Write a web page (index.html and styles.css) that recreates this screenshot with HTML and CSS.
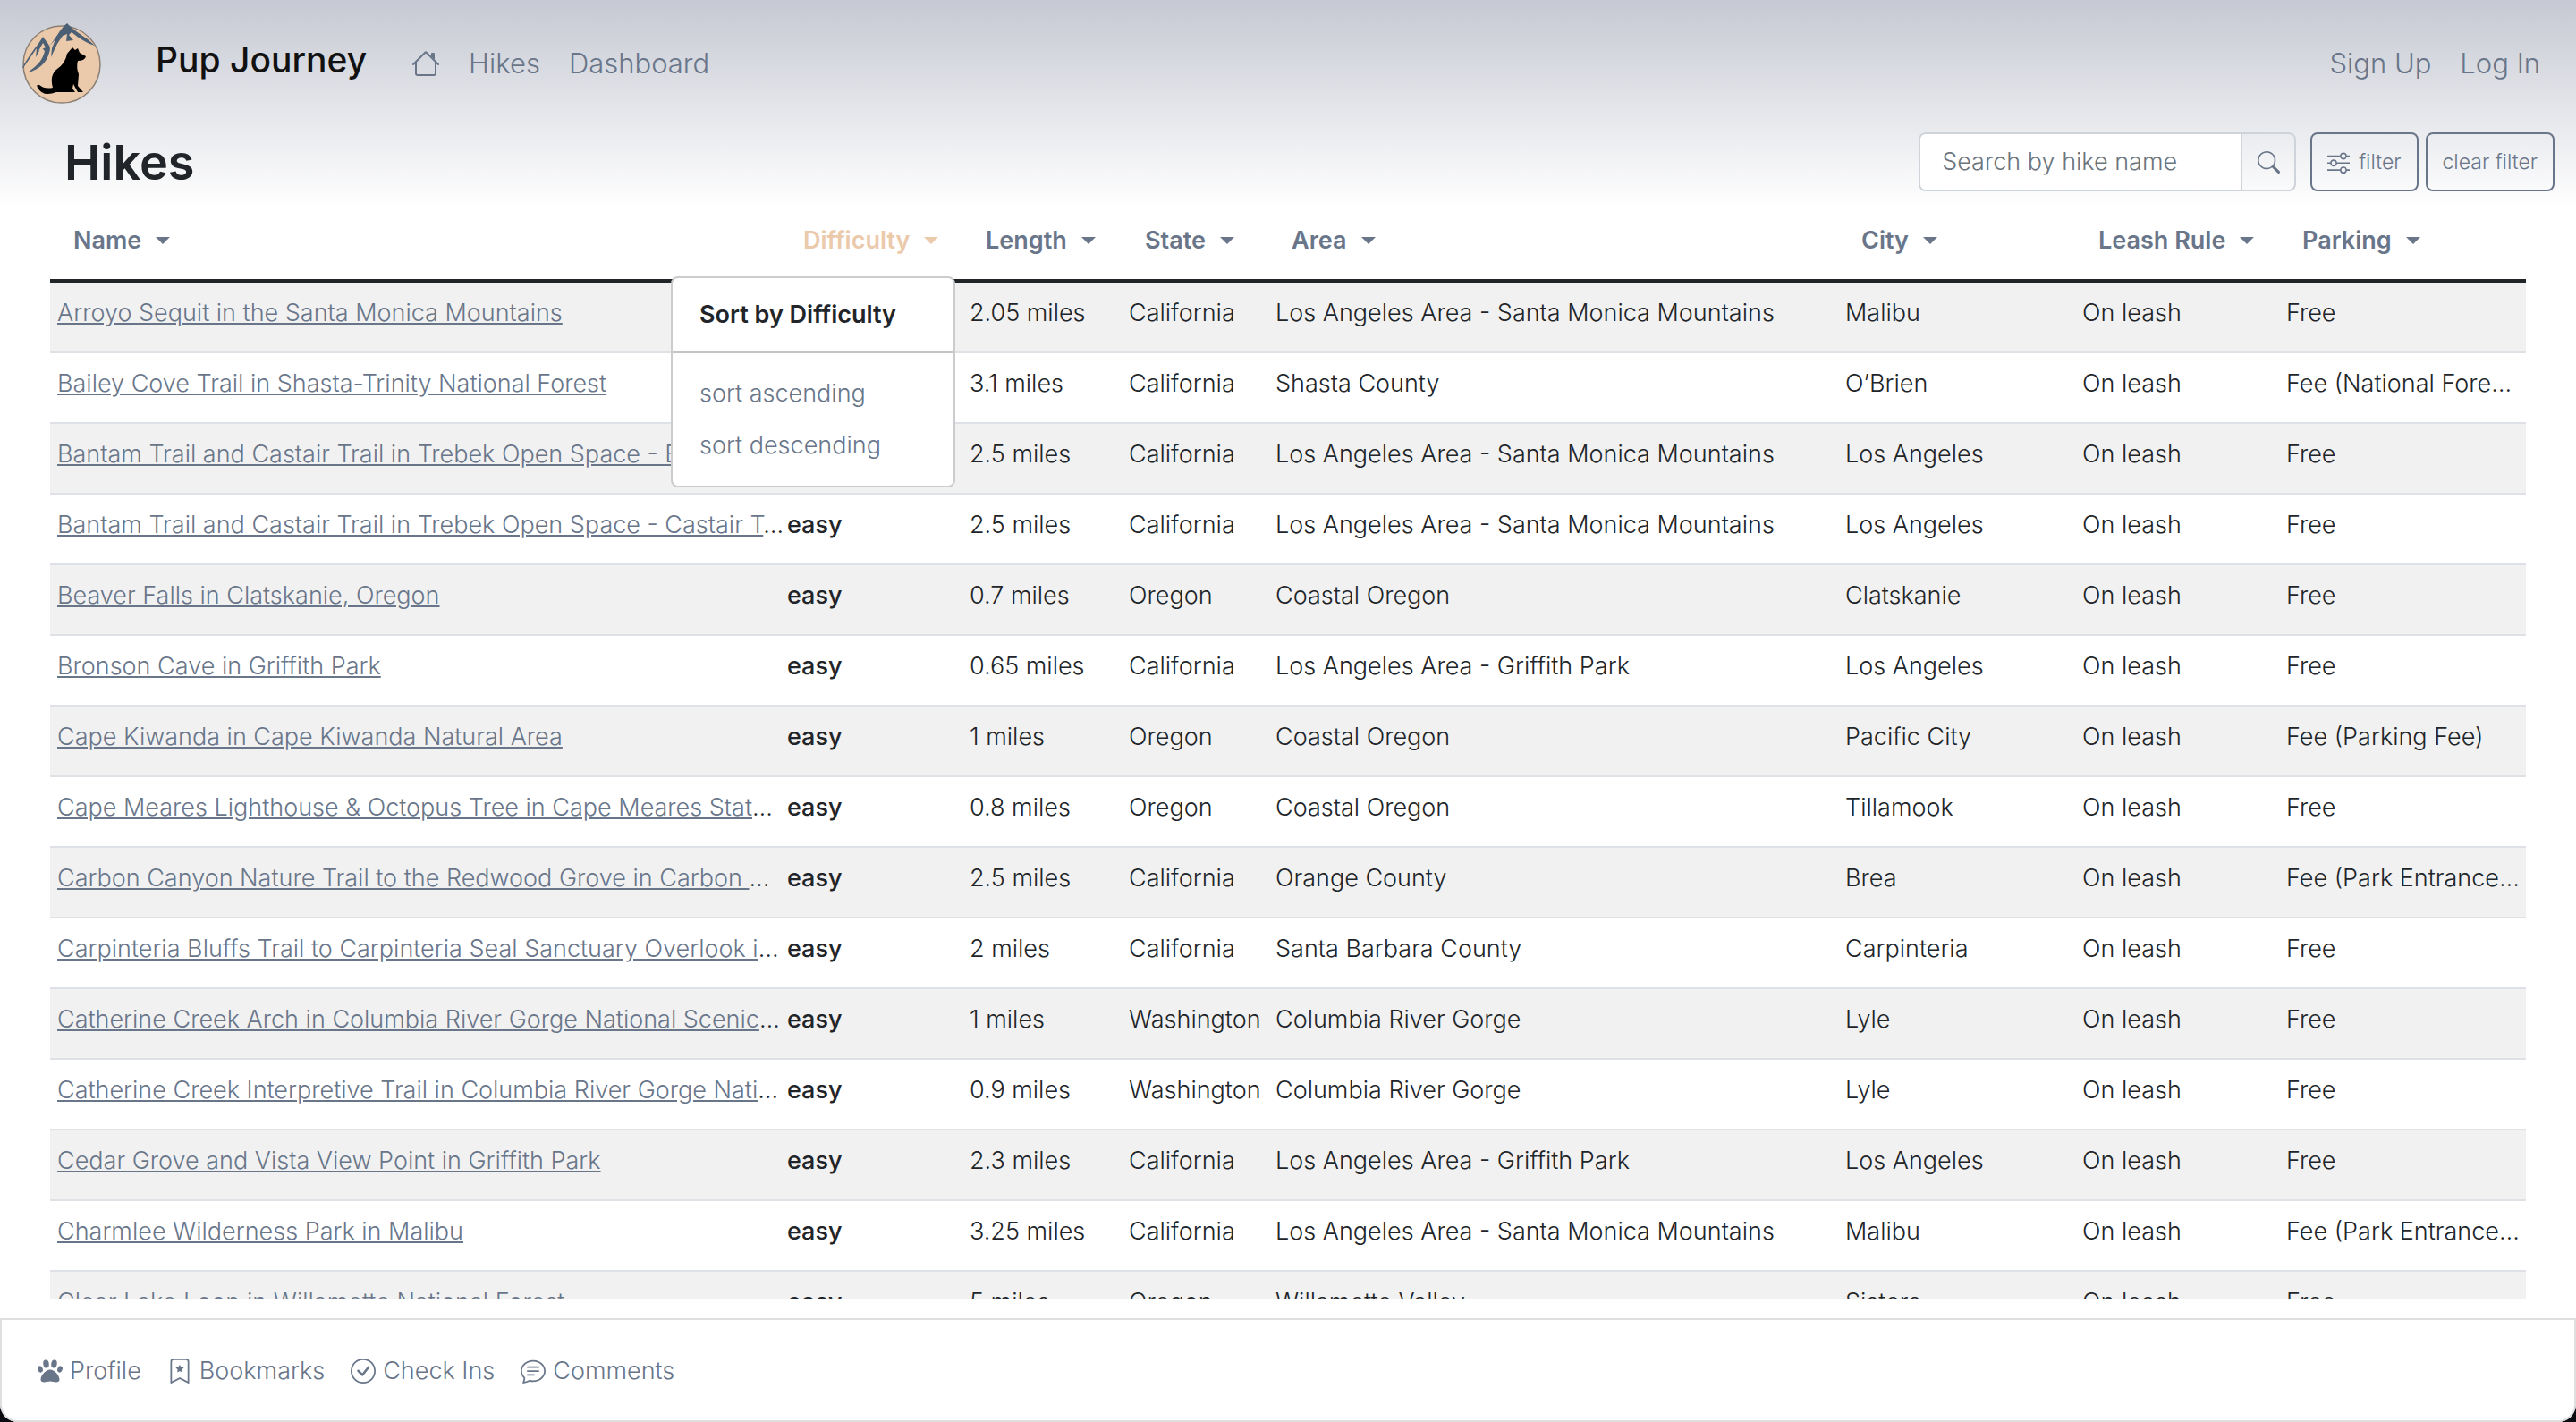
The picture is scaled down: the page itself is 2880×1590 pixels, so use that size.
FILE: index.html
```html
<!DOCTYPE html>
<html lang="en">
<head>
<meta charset="utf-8">
<title>Pup Journey - Hikes</title>
<link rel="stylesheet" href="styles.css">
</head>
<body>
<div class="app">
  <header class="masthead">
    <nav class="navbar">
      <svg class="logo" viewBox="0 0 90 90" aria-hidden="true">
        <circle cx="45" cy="46" r="43" fill="#ebc9ab" stroke="#8c8074" stroke-width="1.5"/>
        <path d="M1 50C7 37 16 28 24 15C29 23 34 25 31 33C28 44 20 52 7 55C17 48 24 41 26 31L22 27L16 38L17 28L8 41L2 50Z" fill="#4c6075"/>
        <path d="M24 22L19 31L27 27Z M12 41L6 49L11 44Z" fill="#ebc9ab"/>
        <path d="M51 0C60 10 71 14 82 25C72 22 65 17 56 10L53 13L58 19L50 20L51 12L46 14L40 23L33 38L34 28L38 18L30 27C38 18 43 6 51 0Z" fill="#4c6075"/>
        <path d="M57 27L60 30L63 28L65 33L72 37Q71 42 63 42Q61 50 64 57L63 70L69 77H63L58 68L57 73L60 77H39Q24 83 18 72Q16 68 20 69Q26 74 35 72Q31 58 40 51Q49 45 51 34Z" fill="#000"/>
      </svg>
      <a class="brand" href="#">Pup Journey</a>
      <a class="nav-link" href="#" aria-label="Home"><svg class="home-icon" viewBox="0 0 16 16" fill="currentColor"><path d="M2 13.5V7h1v6.5a.5.5 0 0 0 .5.5h9a.5.5 0 0 0 .5-.5V7h1v6.5a1.5 1.5 0 0 1-1.5 1.5h-9A1.5 1.5 0 0 1 2 13.500zm11-11V6l-2-2V2.500a.5.5 0 0 1 .5-.5h1a.5.5 0 0 1 .5.5z"/><path d="M7.293 1.500a1 1 0 0 1 1.414 0l6.647 6.646a.5.5 0 0 1-.708.708L8 2.207 1.354 8.854a.5.5 0 1 1-.708-.708L7.293 1.500z"/></svg></a>
      <a class="nav-link" href="#">Hikes</a>
      <a class="nav-link" href="#">Dashboard</a>
      <a class="nav-link push" href="#">Sign Up</a>
      <a class="nav-link" href="#">Log In</a>
    </nav>
    <div class="toolbar">
      <h1>Hikes</h1>
      <form class="search">
        <input type="search" placeholder="Search by hike name" aria-label="Search by hike name">
        <button type="button" aria-label="Search"><svg viewBox="0 0 16 16" fill="currentColor"><path d="M11.742 10.344a6.500 6.500 0 1 0-1.397 1.398h-.001c.03.04.062.078.098.115l3.850 3.850a1 1 0 0 0 1.415-1.414l-3.850-3.850a1.007 1.007 0 0 0-.115-.1zM12 6.500a5.500 5.500 0 1 1-11 0 5.500 5.500 0 0 1 11 0z"/></svg></button>
      </form>
      <button class="tool" type="button"><svg viewBox="0 0 16 16" fill="currentColor"><path fill-rule="evenodd" d="M11.5 2a1.5 1.5 0 1 0 0 3 1.5 1.5 0 0 0 0-3zM9.05 3a2.5 2.5 0 0 1 4.9 0H16v1h-2.05a2.5 2.5 0 0 1-4.9 0H0V3h9.05zM4.5 7a1.5 1.5 0 1 0 0 3 1.5 1.5 0 0 0 0-3zM2.05 8a2.5 2.5 0 0 1 4.9 0H16v1H6.95a2.5 2.5 0 0 1-4.9 0H0V8h2.05zm9.45 4a1.5 1.5 0 1 0 0 3 1.5 1.5 0 0 0 0-3zm-2.45 1a2.5 2.5 0 0 1 4.9 0H16v1h-2.05a2.5 2.5 0 0 1-4.9 0H0v-1h9.05z"/></svg>filter</button>
      <button class="tool" type="button">clear filter</button>
    </div>
  </header>
  <main class="list">
    <table>
      <colgroup><col class="c-name"><col class="c-difficulty"><col class="c-length"><col class="c-state"><col><col class="c-city"><col class="c-leash"><col class="c-parking"></colgroup>
      <thead>
        <tr>
          <th><button class="sort" type="button">Name</button></th>
          <th><button class="sort active" type="button" aria-expanded="true">Difficulty</button>
            <div class="popover">
              <h2>Sort by Difficulty</h2>
              <div class="options"><button type="button">sort ascending</button><button type="button">sort descending</button></div>
            </div>
          </th>
          <th><button class="sort" type="button">Length</button></th>
          <th><button class="sort" type="button">State</button></th>
          <th><button class="sort" type="button">Area</button></th>
          <th><button class="sort" type="button">City</button></th>
          <th><button class="sort" type="button">Leash Rule</button></th>
          <th><button class="sort" type="button">Parking</button></th>
        </tr>
      </thead>
      <tbody>
        <tr><td><a href="#">Arroyo Sequit in the Santa Monica Mountains</a></td><td class="level"></td><td>2.05 miles</td><td>California</td><td>Los Angeles Area - Santa Monica Mountains</td><td>Malibu</td><td>On leash</td><td>Free</td></tr>
        <tr><td><a href="#">Bailey Cove Trail in Shasta-Trinity National Forest</a></td><td class="level"></td><td>3.1 miles</td><td>California</td><td>Shasta County</td><td>O’Brien</td><td>On leash</td><td>Fee (National Fore…</td></tr>
        <tr><td><a href="#">Bantam Trail and Castair Trail in Trebek Open Space - B</a></td><td class="level"></td><td>2.5 miles</td><td>California</td><td>Los Angeles Area - Santa Monica Mountains</td><td>Los Angeles</td><td>On leash</td><td>Free</td></tr>
        <tr><td><a href="#">Bantam Trail and Castair Trail in Trebek Open Space - Castair T</a>…</td><td class="level">easy</td><td>2.5 miles</td><td>California</td><td>Los Angeles Area - Santa Monica Mountains</td><td>Los Angeles</td><td>On leash</td><td>Free</td></tr>
        <tr><td><a href="#">Beaver Falls in Clatskanie, Oregon</a></td><td class="level">easy</td><td>0.7 miles</td><td>Oregon</td><td>Coastal Oregon</td><td>Clatskanie</td><td>On leash</td><td>Free</td></tr>
        <tr><td><a href="#">Bronson Cave in Griffith Park</a></td><td class="level">easy</td><td>0.65 miles</td><td>California</td><td>Los Angeles Area - Griffith Park</td><td>Los Angeles</td><td>On leash</td><td>Free</td></tr>
        <tr><td><a href="#">Cape Kiwanda in Cape Kiwanda Natural Area</a></td><td class="level">easy</td><td>1 miles</td><td>Oregon</td><td>Coastal Oregon</td><td>Pacific City</td><td>On leash</td><td>Fee (Parking Fee)</td></tr>
        <tr><td><a href="#">Cape Meares Lighthouse &amp; Octopus Tree in Cape Meares Stat</a>…</td><td class="level">easy</td><td>0.8 miles</td><td>Oregon</td><td>Coastal Oregon</td><td>Tillamook</td><td>On leash</td><td>Free</td></tr>
        <tr><td><a href="#">Carbon Canyon Nature Trail to the Redwood Grove in Carbon&nbsp;</a>…</td><td class="level">easy</td><td>2.5 miles</td><td>California</td><td>Orange County</td><td>Brea</td><td>On leash</td><td>Fee (Park Entrance…</td></tr>
        <tr><td><a href="#">Carpinteria Bluffs Trail to Carpinteria Seal Sanctuary Overlook i</a>…</td><td class="level">easy</td><td>2 miles</td><td>California</td><td>Santa Barbara County</td><td>Carpinteria</td><td>On leash</td><td>Free</td></tr>
        <tr><td><a href="#">Catherine Creek Arch in Columbia River Gorge National Scenic</a>…</td><td class="level">easy</td><td>1 miles</td><td>Washington</td><td>Columbia River Gorge</td><td>Lyle</td><td>On leash</td><td>Free</td></tr>
        <tr><td><a href="#">Catherine Creek Interpretive Trail in Columbia River Gorge Nati</a>…</td><td class="level">easy</td><td>0.9 miles</td><td>Washington</td><td>Columbia River Gorge</td><td>Lyle</td><td>On leash</td><td>Free</td></tr>
        <tr><td><a href="#">Cedar Grove and Vista View Point in Griffith Park</a></td><td class="level">easy</td><td>2.3 miles</td><td>California</td><td>Los Angeles Area - Griffith Park</td><td>Los Angeles</td><td>On leash</td><td>Free</td></tr>
        <tr><td><a href="#">Charmlee Wilderness Park in Malibu</a></td><td class="level">easy</td><td>3.25 miles</td><td>California</td><td>Los Angeles Area - Santa Monica Mountains</td><td>Malibu</td><td>On leash</td><td>Fee (Park Entrance…</td></tr>
        <tr><td><a href="#">Clear Lake Loop in Willamette National Forest</a></td><td class="level">easy</td><td>5 miles</td><td>Oregon</td><td>Willamette Valley</td><td>Sisters</td><td>On leash</td><td>Free</td></tr>
      </tbody>
    </table>
  </main>
  <footer class="tabs">
    <a href="#"><svg viewBox="0 0 28 28" fill="currentColor"><ellipse cx="9.500" cy="6" rx="3.200" ry="4.600" transform="rotate(-8 9.500 6)"/><ellipse cx="18.500" cy="6" rx="3.200" ry="4.600" transform="rotate(8 18.500 6)"/><ellipse cx="3" cy="12" rx="2.800" ry="3.800" transform="rotate(-18 3 12)"/><ellipse cx="25" cy="12" rx="2.800" ry="3.800" transform="rotate(18 25 12)"/><path d="M14 12.500C8.500 12.500 3.500 19.500 3.500 23.500C3.500 27.500 8.500 26.500 14 25.500C19.500 26.500 24.500 27.500 24.500 23.500C24.500 19.500 19.500 12.500 14 12.500Z"/></svg>Profile</a>
    <a href="#"><svg viewBox="0 0 16 16" fill="currentColor"><path d="M7.84 4.1a.178.178 0 0 1 .32 0l.634 1.285a.178.178 0 0 0 .134.098l1.42.206c.145.021.204.2.098.303L9.42 6.993a.178.178 0 0 0-.051.158l.242 1.414a.178.178 0 0 1-.258.187l-1.27-.668a.178.178 0 0 0-.165 0l-1.27.668a.178.178 0 0 1-.257-.187l.242-1.414a.178.178 0 0 0-.05-.158l-1.03-1.001a.178.178 0 0 1 .098-.303l1.42-.206a.178.178 0 0 0 .134-.098L7.84 4.1z"/><path d="M2 2a2 2 0 0 1 2-2h8a2 2 0 0 1 2 2v13.5a.5.5 0 0 1-.777.416L8 13.101l-5.223 2.815A.5.5 0 0 1 2 15.500V2zm2-1a1 1 0 0 0-1 1v12.566l4.723-2.482a.5.5 0 0 1 .554 0L13 14.566V2a1 1 0 0 0-1-1H4z"/></svg>Bookmarks</a>
    <a href="#"><svg viewBox="0 0 16 16" fill="currentColor"><path d="M8 15A7 7 0 1 1 8 1a7 7 0 0 1 0 14zm0 1A8 8 0 1 0 8 0a8 8 0 0 0 0 16z"/><path d="M10.97 4.970a.235.235 0 0 0-.02.022L7.477 9.417 5.384 7.323a.75.75 0 0 0-1.060 1.060L6.970 11.030a.75.75 0 0 0 1.079-.02l3.992-4.990a.75.75 0 0 0-1.071-1.050z"/></svg>Check Ins</a>
    <a href="#"><svg viewBox="0 0 16 16" fill="currentColor"><path d="M2.678 11.894a1 1 0 0 1 .287.801 10.970 10.970 0 0 1-.398 2c1.395-.323 2.247-.697 2.634-.893a1 1 0 0 1 .71-.074A8.060 8.060 0 0 0 8 14c3.996 0 7-2.807 7-6 0-3.192-3.004-6-7-6S1 4.808 1 8c0 1.468.617 2.830 1.678 3.894zm-.493 3.905a21.682 21.682 0 0 1-.713.129c-.2.032-.352-.176-.273-.362a9.680 9.680 0 0 0 .244-.637l.003-.010c.248-.72.450-1.548.524-2.319C.743 11.370 0 9.760 0 8c0-3.866 3.582-7 8-7s8 3.134 8 7-3.582 7-8 7a9.060 9.060 0 0 1-2.347-.306c-.52.263-1.639.742-3.468 1.105z"/><path d="M4 5.500a.5.5 0 0 1 .5-.5h7a.5.5 0 0 1 0 1h-7a.5.5 0 0 1-.5-.5zM4 8a.5.5 0 0 1 .5-.5h7a.5.5 0 0 1 0 1h-7A.5.5 0 0 1 4 8zm0 2.500a.5.5 0 0 1 .5-.5h4a.5.5 0 0 1 0 1h-4a.5.5 0 0 1-.5-.5z"/></svg>Comments</a>
  </footer>
</div>
</body>
</html>
```
FILE: styles.css
```css
:root {
  --slate: #69768a;
  --ink: #212529;
  --line: #dee2e6;
}

* { box-sizing: border-box; }

body {
  margin: 0;
  background: #0b0c12;
  color: var(--ink);
  font: 300 27px/42px Inter, "Liberation Sans", sans-serif;
}

a { color: var(--slate); }

button, input {
  font: inherit;
  color: inherit;
  background: none;
  border: 0;
  margin: 0;
  padding: 0;
}

svg { display: block; flex: none; }

.app {
  display: flex;
  flex-direction: column;
  height: 100vh;
  overflow: hidden;
  background: #fff;
  border-radius: 0 0 20px 20px;
}

.masthead {
  flex: none;
  padding-bottom: 18px;
  background: linear-gradient(#c6c9d3, #fff);
}

.navbar {
  display: flex;
  align-items: center;
  gap: 32px;
  padding: 26px 40px 32px 24px;
}

.logo { width: 90px; height: 90px; }

.brand {
  margin: 0 18px 8px 28px;
  color: #111;
  font-size: 39px;
  font-weight: 500;
  text-decoration: none;
}

.nav-link {
  color: var(--slate);
  font-size: 31px;
  text-decoration: none;
}

.home-icon { width: 32px; height: 32px; }

.push { margin-left: auto; }

.toolbar {
  display: flex;
  align-items: stretch;
  gap: 8px;
  height: 66px;
  padding: 0 24px 0 72px;
}

h1 {
  margin: 0 auto 0 0;
  font-size: 54px;
  font-weight: 600;
  line-height: 68px;
}

.search {
  display: flex;
  width: 422px;
  margin-right: 8px;
  border: 2px solid #ced4da;
  border-radius: 8px;
  overflow: hidden;
}

.search input {
  flex: 1;
  min-width: 0;
  padding: 0 24px;
  background: #fff;
}

.search input::placeholder { color: #6c757d; opacity: 1; }

.search button {
  display: flex;
  align-items: center;
  justify-content: center;
  width: 60px;
  border-left: 2px solid #ced4da;
  color: var(--slate);
}

.search svg, .tool svg { width: 25px; height: 25px; }

.tool {
  display: flex;
  align-items: center;
  gap: 10px;
  padding: 0 17px;
  border: 2px solid var(--slate);
  border-radius: 8px;
  color: var(--slate);
  font-size: 23px;
}

.list {
  flex: 1;
  min-height: 0;
  margin: 0 56px 21px;
  overflow: hidden;
}

table {
  width: 100%;
  table-layout: fixed;
  border-spacing: 0;
}

.c-name { width: 816px; }
.c-difficulty { width: 204px; }
.c-length { width: 178px; }
.c-state { width: 164px; }
.c-city { width: 265px; }
.c-leash { width: 228px; }
.c-parking { width: 276px; }

th, td {
  padding: 13px 8px 22px;
  text-align: left;
  white-space: nowrap;
}

th {
  position: relative;
  padding: 16px 0 22px 26px;
  border-bottom: 4px solid var(--ink);
}

td { border-bottom: 2px solid var(--line); }

tbody tr:nth-child(odd) { background: #f1f1f1; }

.level { font-weight: 500; }

.sort {
  display: flex;
  align-items: center;
  gap: 16px;
  color: var(--slate);
  font-weight: 600;
}

.sort::after {
  content: "";
  border: 8px solid transparent;
  border-top-color: currentColor;
  border-bottom: 0;
}

.sort.active { color: #ebc9ab; }

.popover {
  position: absolute;
  z-index: 2;
  top: 77px;
  left: -122px;
  width: 318px;
  background: #fff;
  border: 2px solid #ccc;
  border-radius: 8px;
}

.popover h2 {
  margin: 0;
  padding: 20px 30px;
  border-bottom: 2px solid #c4c4c4;
  font-size: 27px;
  font-weight: 600;
}

.options {
  display: flex;
  flex-direction: column;
  align-items: flex-start;
  gap: 16px;
  padding: 24px 30px;
}

.options button { color: var(--slate); font-weight: 300; }

.tabs {
  display: flex;
  flex: none;
  align-items: center;
  gap: 29px;
  height: 116px;
  padding: 2px 40px 0;
  border: 2px solid #dfdfdf;
  border-radius: 0 0 20px 20px;
}

.tabs a {
  display: flex;
  align-items: center;
  gap: 8px;
  text-decoration: none;
}

.tabs svg { width: 28px; height: 28px; }
```
